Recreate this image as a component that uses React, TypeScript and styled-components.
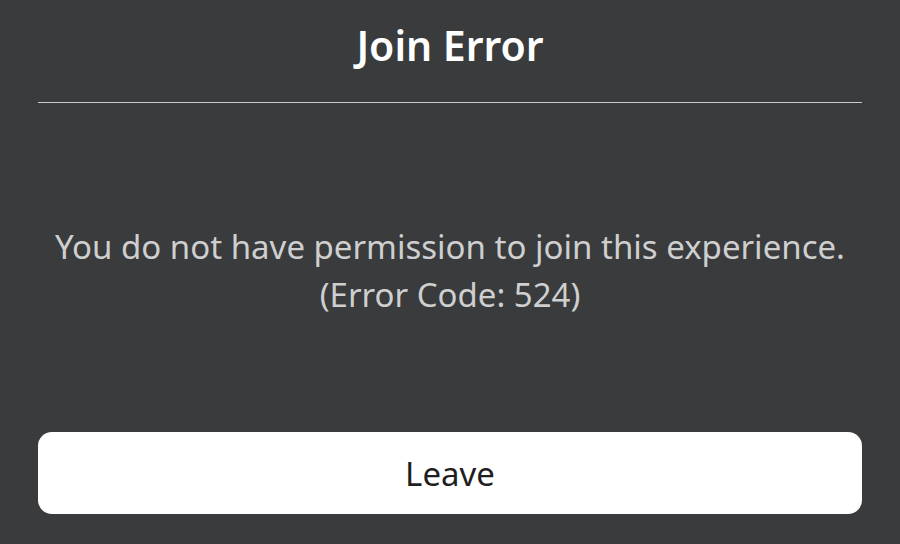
import React from 'react';
import styled, { createGlobalStyle } from 'styled-components';

const GlobalStyle = createGlobalStyle`
  html, body {
    margin: 0;
    padding: 0;
    background: #393b3d;
  }
  body {
    font-family: "Noto Sans", "Open Sans", sans-serif;
  }
`;

const Screen = styled.div`
  width: 900px;
  height: 544px;
  display: flex;
  flex-direction: column;
  padding: 0 38px;
  box-sizing: border-box;
  background: #393b3d;
`;

const Title = styled.h1`
  margin: 0;
  height: 103px;
  padding-bottom: 12px;
  display: flex;
  align-items: center;
  justify-content: center;
  font-size: 41px;
  font-weight: 600;
  color: #ffffff;
  border-bottom: 1.5px solid #c9c9c9;
  box-sizing: border-box;
`;

const Body = styled.div`
  flex: 1;
  display: flex;
  align-items: center;
  justify-content: center;
  padding-top: 6px;
`;

const Message = styled.p`
  margin: 0;
  text-align: center;
  font-size: 33px;
  line-height: 48px;
  color: #cfcfcf;
`;

const LeaveButton = styled.button`
  height: 82px;
  margin-bottom: 30px;
  border: none;
  border-radius: 14px;
  background: #ffffff;
  color: #1f1f1f;
  font-family: inherit;
  font-size: 33px;
  cursor: pointer;
`;

const App: React.FC = () => {
  return (
    <>
      <GlobalStyle />
      <Screen>
        <Title>Join Error</Title>
        <Body>
          <Message>
            You do not have permission to join this experience.
            <br />
            (Error Code: 524)
          </Message>
        </Body>
        <LeaveButton>Leave</LeaveButton>
      </Screen>
    </>
  );
};

export default App;
